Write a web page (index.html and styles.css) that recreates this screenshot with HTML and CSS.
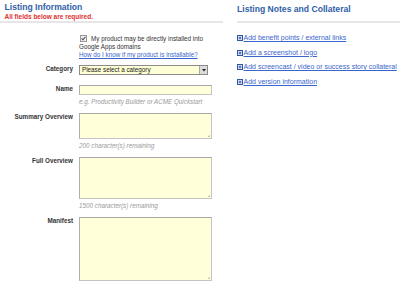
FILE: index.html
```html
<!DOCTYPE html>
<html lang="en">
<head>
<meta charset="utf-8">
<title>Listing Information</title>
<link rel="stylesheet" href="styles.css">
</head>
<body>
<div class="page">
  <section class="col-main">
    <header class="head head-main">
      <h1 class="title">Listing Information</h1>
      <p class="req">All fields below are required.</p>
    </header>
    <div class="install">
      <span class="check"><svg width="7" height="7" viewBox="0 0 7 7"><rect x="0.5" y="0.5" width="6" height="6" fill="#ececec" stroke="#9a9a9a"/><path d="M1.6 3.4 L2.9 4.8 L5.4 1.9" fill="none" stroke="#555" stroke-width="1.1"/></svg></span>My product may be directly installed into Google Apps domains<br>
      <a class="link" href="#">How do I know if my product is installable?</a>
    </div>
    <div class="grid">
      <label class="lbl">Category</label>
      <div class="field field-select">
        <div class="select">
          <span class="select-text">Please select a category</span>
          <span class="select-btn"><svg width="4" height="3" viewBox="0 0 4 3"><path d="M0 0 H4 L2 2.5 Z" fill="#222"/></svg></span>
        </div>
      </div>

      <label class="lbl">Name</label>
      <div class="field">
        <div class="input"></div>
        <div class="hint">e.g. Productivity Builder or ACME Quickstart</div>
      </div>

      <label class="lbl">Summary Overview</label>
      <div class="field">
        <div class="area area-summary"></div>
        <div class="hint">200 character(s) remaining</div>
      </div>

      <label class="lbl">Full Overview</label>
      <div class="field">
        <div class="area area-full"></div>
        <div class="hint">1500 character(s) remaining</div>
      </div>

      <label class="lbl">Manifest</label>
      <div class="field">
        <div class="area area-manifest"></div>
      </div>
    </div>
  </section>

  <section class="col-side">
    <header class="head head-side">
      <h2 class="title">Listing Notes and Collateral</h2>
    </header>
    <ul class="links">
      <li class="item"><span class="plus"><svg width="6" height="6" viewBox="0 0 6 6"><rect x="0.5" y="0.5" width="5" height="5" fill="#e4eaf8" stroke="#2f56a6"/><path d="M3 1.6 V4.4 M1.6 3 H4.4" stroke="#2f56a6" stroke-width="1"/></svg></span><a class="link side-link" href="#">Add benefit points / external links</a></li>
      <li class="item"><span class="plus"><svg width="6" height="6" viewBox="0 0 6 6"><rect x="0.5" y="0.5" width="5" height="5" fill="#e4eaf8" stroke="#2f56a6"/><path d="M3 1.6 V4.4 M1.6 3 H4.4" stroke="#2f56a6" stroke-width="1"/></svg></span><a class="link side-link" href="#">Add a screenshot / logo</a></li>
      <li class="item"><span class="plus"><svg width="6" height="6" viewBox="0 0 6 6"><rect x="0.5" y="0.5" width="5" height="5" fill="#e4eaf8" stroke="#2f56a6"/><path d="M3 1.6 V4.4 M1.6 3 H4.4" stroke="#2f56a6" stroke-width="1"/></svg></span><a class="link side-link" href="#">Add screencast / video or success story collateral</a></li>
      <li class="item"><span class="plus"><svg width="6" height="6" viewBox="0 0 6 6"><rect x="0.5" y="0.5" width="5" height="5" fill="#e4eaf8" stroke="#2f56a6"/><path d="M3 1.6 V4.4 M1.6 3 H4.4" stroke="#2f56a6" stroke-width="1"/></svg></span><a class="link side-link" href="#">Add version information</a></li>
    </ul>
  </section>
</div>
</body>
</html>
```
FILE: styles.css
```css
html, body {
  margin: 0;
  padding: 0;
  background: #ffffff;
  overflow: hidden;
}
body {
  font-family: "Liberation Sans", Arial, sans-serif;
  font-size: 6.3px;
  line-height: 8px;
  color: #333333;
}
.page {
  display: flex;
  width: 400px;
  height: 284px;
}
.col-main {
  width: 223px;
  flex: none;
}
.col-side {
  flex: 1;
  margin-left: 14px;
}
.head {
  border-bottom: 2px solid #e6e6e6;
  box-sizing: border-box;
  height: 23px;
}
.head-main {
  padding: 2px 0 0 4.5px;
}
.head-side {
  padding-top: 3.5px;
}
.title {
  margin: 0;
  font-size: 8.6px;
  line-height: 11px;
  font-weight: bold;
  color: #2f5ea8;
}
.req {
  margin: 0;
  font-size: 6.5px;
  line-height: 8px;
  font-weight: bold;
  color: #dd3030;
}
.install {
  margin-left: 79px;
  width: 133px;
  padding-top: 12px;
  line-height: 8px;
}
.check {
  display: inline-block;
  width: 7px;
  height: 7px;
  margin: 0 4px 0 1px;
  vertical-align: -1px;
}
.check svg {
  display: block;
}
.link {
  color: #3a66cc;
  text-decoration: underline;
}
.grid {
  display: grid;
  grid-template-columns: 73px 133px;
  column-gap: 6px;
  margin-top: 6px;
  align-items: start;
}
.lbl {
  text-align: right;
  font-weight: bold;
  color: #333333;
  line-height: 8px;
}
.field {
  margin-bottom: 7px;
}
.field-select {
  margin-bottom: 10px;
}
.select {
  display: flex;
  width: 129px;
  height: 10px;
  box-sizing: border-box;
  border: 1px solid #8c8c8c;
  background: #ffffd6;
}
.select-text {
  flex: 1;
  padding-left: 2px;
  line-height: 8px;
  color: #222222;
}
.select-btn {
  width: 7px;
  display: flex;
  align-items: center;
  justify-content: center;
  background: #dcdcdc;
  border-left: 1px solid #a8a8a8;
}
.select-btn svg {
  display: block;
}
.input,
.area {
  box-sizing: border-box;
  width: 133px;
  background: #ffffd9;
  border: 1px solid #c4c4c4;
  border-top-color: #a8a8a8;
  border-left-color: #b0b0b0;
}
.input {
  height: 10px;
}
.area {
  background-image: linear-gradient(135deg, transparent 0 75%, #c8c8b0 75% 80%, transparent 80% 88%, #c8c8b0 88% 93%, transparent 93%);
  background-size: 5px 5px;
  background-position: right 1px bottom 1px;
  background-repeat: no-repeat;
}
.area-summary {
  height: 26px;
}
.area-full {
  height: 42px;
}
.area-manifest {
  height: 64px;
}
.hint {
  margin-top: 3px;
  font-style: italic;
  color: #9a9a9a;
  line-height: 8px;
}
.links {
  list-style: none;
  margin: 0;
  padding: 11px 0 0 0;
}
.item {
  display: flex;
  align-items: center;
  height: 8px;
  margin-bottom: 6.5px;
}
.plus {
  width: 6px;
  height: 6px;
  margin-right: 0.5px;
  flex: none;
}
.plus svg {
  display: block;
}
.side-link {
  font-size: 7px;
  line-height: 8px;
}
```
